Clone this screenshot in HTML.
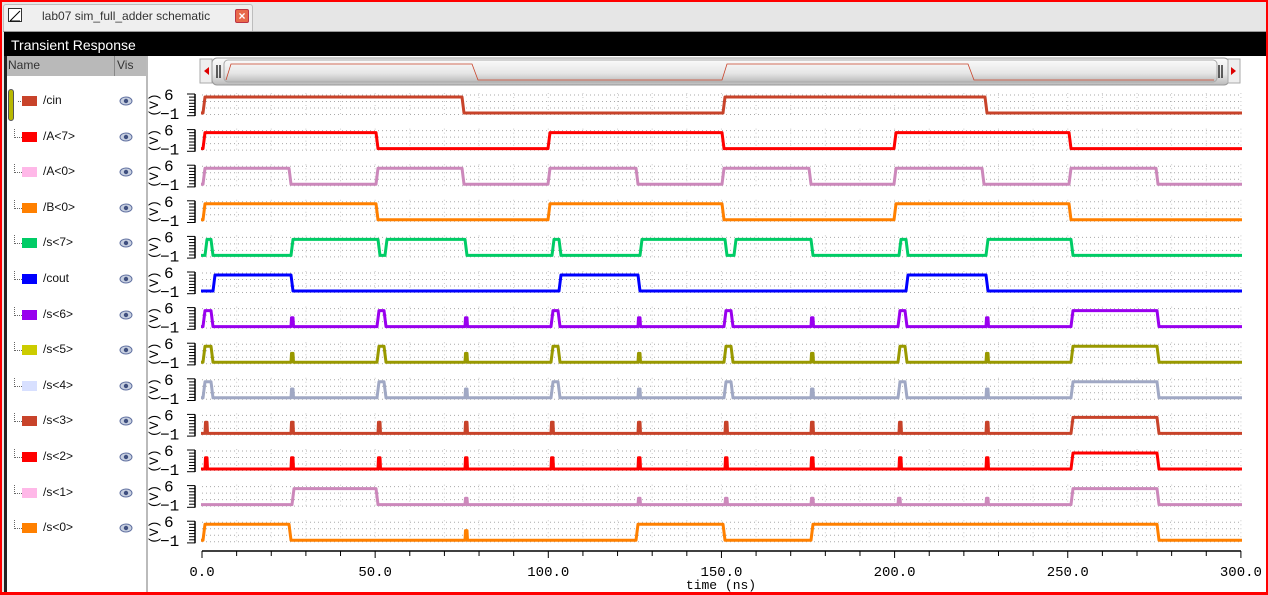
<!DOCTYPE html>
<html><head><meta charset="utf-8"><style>
*{margin:0;padding:0;box-sizing:border-box}
body{width:1268px;height:595px;overflow:hidden;background:#e6e6e6;font-family:"Liberation Sans",sans-serif;position:relative}
.abs{position:absolute}
</style></head><body>
<div class="abs" style="left:0;top:0;width:1268px;height:595px;border:2px solid #f00;border-bottom:3px solid #f00;z-index:5;pointer-events:none"></div>
<div class="abs" style="left:3px;top:4px;width:250px;height:27px;background:#efefef;border:1px solid #bdbdbd;border-bottom:none;border-radius:3px 3px 0 0"></div>
<div class="abs" style="left:8px;top:8px;width:14px;height:14px;border:1px solid #333;background:#fff"><svg width="12" height="12"><line x1="1" y1="11" x2="11" y2="1" stroke="#000"/><line x1="1" y1="11" x2="11" y2="11" stroke="#000"/></svg></div>
<div class="abs" style="left:42px;top:9px;font-size:12px;color:#333">lab07 sim_full_adder schematic</div>
<div class="abs" style="left:235px;top:9px;width:14px;height:14px;background:#e8694a;border:1px solid #b34;border-radius:2px;color:#fff;font-size:12px;line-height:12px;text-align:center;font-weight:bold">×</div>
<div class="abs" style="left:3px;top:31px;width:1263px;height:1px;background:#999"></div>
<div class="abs" style="left:4px;top:32px;width:1262px;height:561px;background:#fff;border-left:3px solid #222"></div>
<div class="abs" style="left:4px;top:32px;width:1262px;height:24px;background:#000;color:#fff;font-size:14px;padding:5px 0 0 7px">Transient Response</div>
<div class="abs" style="left:7px;top:56px;width:139px;height:20px;background:#b9b9b9;font-size:12px;color:#333"><span style="position:absolute;left:1px;top:2px">Name</span><span style="position:absolute;left:107px;top:0;width:1px;height:20px;background:#888"></span><span style="position:absolute;left:110px;top:2px">Vis</span></div>
<div class="abs" style="left:146px;top:56px;width:2px;height:537px;background:#bbb"></div>
<div class="abs" style="left:8px;top:89px;width:6px;height:32px;background:#b8b800;border:1px solid #555;border-radius:3px"></div>
<div id="leg"></div>
<svg id="plot" class="abs" style="left:0;top:0" width="1268" height="595"></svg>
<script>
var names=["/cin","/A<7>","/A<0>","/B<0>","/s<7>","/cout","/s<6>","/s<5>","/s<4>","/s<3>","/s<2>","/s<1>","/s<0>"];
var sw=["#c8432a","#ff0000","#ffb8e8","#ff8000","#00cc66","#0000ff","#9900ee","#cccc00","#d8e0ff","#c8432a","#ff0000","#ffb8e8","#ff8000"];
var wc=["#c8432a","#ff0000","#cc88bb","#ff8000","#00cc66","#0000ff","#9900ee","#999900","#a0a8c4","#c8432a","#ff0000","#cc88bb","#ff8000"];
var leg="";
for(var i=0;i<13;i++){var y=102+35.6*i;
leg+='<div class="abs" style="left:'+(i?15:18)+'px;top:'+(y-1)+'px;width:7px;border-top:1px dotted #666"></div>';
if(i)leg+='<div class="abs" style="left:14px;top:'+(y-9)+'px;height:9px;border-left:1px dotted #666"></div>';
leg+='<div class="abs" style="left:22px;top:'+(y-6)+'px;width:15px;height:10px;background:'+sw[i]+'"></div>';
leg+='<div class="abs" style="left:43px;top:'+(y-9)+'px;font-size:12px;color:#111">'+names[i].replace(/</g,"&lt;").replace(/>/g,"&gt;")+'</div>';
leg+='<svg class="abs" style="left:119px;top:'+(y-6)+'px" width="14" height="10"><ellipse cx="7" cy="5" rx="6" ry="4" fill="#c8d0e0" stroke="#6070a0"/><circle cx="7" cy="5" r="2.2" fill="#405080"/></svg>';}
document.getElementById("leg").innerHTML=leg;
var s="";
s+='<defs><linearGradient id="g" x1="0" y1="0" x2="0" y2="1"><stop offset="0" stop-color="#fafafa"/><stop offset="0.6" stop-color="#e6e6e6"/><stop offset="1" stop-color="#bbb"/></linearGradient></defs>';
s+='<rect x="200" y="59" width="12" height="24" fill="#eee" stroke="#aaa"/><path d="M204 71 L209 67 L209 75Z" fill="#d00"/>';
s+='<rect x="212" y="58" width="1017" height="27" rx="5" fill="url(#g)" stroke="#999"/>';
s+='<rect x="224" y="60" width="993" height="22" rx="4" fill="url(#g)" stroke="#aaa"/>';
s+='<path d="M217 65V78M220 65V78M1219 65V78M1222 65V78" stroke="#000" stroke-width="1.2"/>';
s+='<rect x="1228" y="59" width="12" height="24" fill="#eee" stroke="#aaa"/><path d="M1236 71 L1231 67 L1231 75Z" fill="#d00"/>';
s+='<path d="M226 80 L231 64 L472 64 L478 80 L722 80 L727 64 L968 64 L974 80 L1214 80" fill="none" stroke="#c8432a" stroke-width="0.8"/>';
for(var i=0;i<13;i++){var t=92+35.6*i;
 for(var k=0;k<4;k++){var yy=t+3+k*6.5;s+='<line x1="202" x2="1241" y1="'+yy+'" y2="'+yy+'" stroke="#aaa" stroke-dasharray="1 3"/>';}
 for(var k=1;k<=30;k++){var xx=202+k*34.63;s+='<line x1="'+xx+'" x2="'+xx+'" y1="'+(t+1)+'" y2="'+(t+24)+'" stroke="#ccc" stroke-dasharray="1 3"/>';}
 s+='<line x1="195" x2="195" y1="'+(t+2)+'" y2="'+(t+24)+'" stroke="#000" stroke-width="1.5"/>';
 for(var k=0;k<8;k++)s+='<line x1="'+(k%7==0?187:189)+'" x2="195" y1="'+(t+2+k*3.1)+'" y2="'+(t+2+k*3.1)+'" stroke="#000"/>';
 s+='<text x="164" y="'+(t+8)+'" font-family="Liberation Mono,monospace" font-size="16">6</text>';
 s+='<text x="160" y="'+(t+27)+'" font-family="Liberation Mono,monospace" font-size="16">−1</text>';
 s+='<text transform="translate(158,'+(t+13)+') rotate(-90)" text-anchor="middle" font-family="Liberation Mono,monospace" font-size="13">(V)</text>';
}
s+='<line x1="202" x2="1241" y1="551" y2="551" stroke="#000" stroke-width="1.5"/>';
for(var k=0;k<=30;k++){var xx=202+k*34.63;s+='<line x1="'+xx+'" x2="'+xx+'" y1="551" y2="'+(k%5==0?558:556)+'" stroke="#000"/>';}
var lb=["0.0","50.0","100.0","150.0","200.0","250.0","300.0"];
for(var k=0;k<7;k++)s+='<text x="'+(202+k*173.15)+'" y="576" text-anchor="middle" font-family="Liberation Mono,monospace" font-size="14">'+lb[k]+'</text>';
s+='<text x="721" y="589" text-anchor="middle" font-family="Liberation Mono,monospace" font-size="13">time (ns)</text>';
var pul=[[203,211],[377,384],[551,558],[724,731],[898,905]];
var spk=[291,465,638,811,986];
var W=[
 {h:[[203,462],[723,985]]},
 {h:[[203,376],[548,722],[894,1069]]},
 {h:[[203,289],[376,462],[548,636],[722,809],[894,982],[1069,1156]]},
 {h:[[203,376],[548,722],[894,1069]]},
 {h:[[205,211],[291,378],[385,465],[552,559],[640,725],[734,811],[899,906],[986,1071]]},
 {h:[[213,291],[559,638],[906,986]]},
 {h:pul.concat([[1071,1157]]),s:spk},
 {h:pul.concat([[1071,1157]]),s:spk},
 {h:pul.concat([[1071,1157]]),s:spk},
 {h:[[1071,1157]],s:[205,291,378,465,551,638,725,811,899,986],sh:0.7},
 {h:[[1071,1157]],s:[205,291,378,465,551,638,725,811,899,986],sh:0.7},
 {h:[[292,376],[1071,1157]],s:[465,638,725,811,898,986],sh:0.4},
 {h:[[203,289],[636,723],[811,1157]],s:[465],sh:0.6}
];
for(var i=0;i<13;i++){var hi=97+35.6*i,lo=113+35.6*i,w=W[i];
 var d="M201 "+lo;var ev=[];
 w.h.forEach(function(p){ev.push([p[0],1],[p[1],0])});
 (w.s||[]).forEach(function(x){ev.push([x,2])});
 ev.sort(function(a,b){return a[0]-b[0]});
 var lvl=lo;
 ev.forEach(function(e){var x=e[0];
  if(e[1]==1){d+=" L"+x+" "+lo+" L"+(x+2)+" "+hi;lvl=hi;}
  else if(e[1]==0){d+=" L"+x+" "+hi+" L"+(x+2)+" "+lo;lvl=lo;}
  else{var sh=lo-(lo-hi)*(w.sh||0.55);d+=" L"+x+" "+lvl+" L"+(x+0.5)+" "+(lvl==lo?sh:lvl+3)+" L"+(x+2)+" "+(lvl==lo?sh:lvl+3)+" L"+(x+2.5)+" "+lvl;}
 });
 d+=" L1242 "+lvl;
 s+='<path d="'+d+'" fill="none" stroke="'+wc[i]+'" stroke-width="3" stroke-linejoin="round"/>';
}
document.getElementById("plot").innerHTML=s;
</script>
</body></html>
